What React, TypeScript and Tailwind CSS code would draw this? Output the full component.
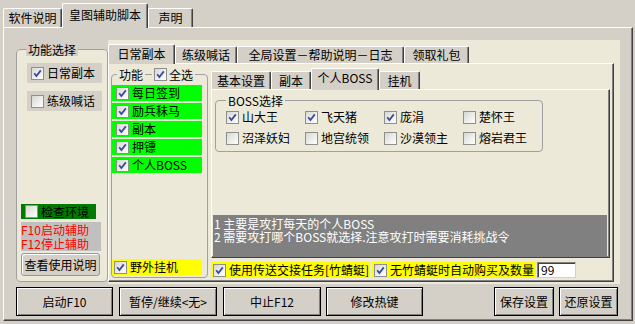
import React from 'react';

const FONT = "font-['Noto_Sans_CJK_SC','Noto_Sans',sans-serif]";
const PANEL =
  'border-l border-t border-white border-r border-b border-r-[#404040] border-b-[#404040] shadow-[inset_-1px_-1px_0_#808080]';
const TAB =
  'flex items-center justify-center rounded-t-[2px] border-l border-t border-white border-r border-r-[#404040] shadow-[inset_-1px_0_0_#808080] bg-[#d4d0c8]';
const BTN =
  'flex h-[29px] items-center justify-center border border-black bg-[#d4d0c8] shadow-[inset_1px_1px_0_#ffffff,inset_-1px_-1px_0_#808080]';

// xp style checkbox
function Box({ on }: { on?: boolean }) {
  return (
    <span className="flex h-[13px] w-[13px] shrink-0 items-center justify-center border border-[#8e8f8f] bg-linear-to-br from-[#d8d8d2] to-white">
      {on && (
        <svg width="9" height="9" viewBox="0 0 9 9">
          <path d="M1.2 4.2 L3.4 7 L7.8 1.4" fill="none" stroke="#3a4aa0" strokeWidth="1.8" />
        </svg>
      )}
    </span>
  );
}

const funcs = ['每日签到', '励兵秣马', '副本', '押镖', '个人BOSS'];
const bosses = [
  { name: '山大王', on: true },
  { name: '飞天猪', on: true },
  { name: '庞涓', on: true },
  { name: '楚怀王', on: false },
  { name: '沼泽妖妇', on: false },
  { name: '地宫统领', on: false },
  { name: '沙漠领主', on: false },
  { name: '熔岩君王', on: false },
];

export default function App() {
  return (
    <div className={`h-[324px] w-[635px] overflow-hidden bg-[#d4d0c8] pl-[3px] pt-[3px] text-[12px] leading-[14px] text-black ${FONT}`}>
      {/* outer tabs */}
      <div className="flex h-[24px] items-end">
        <div className={`${TAB} h-[19px] w-[59px]`}>软件说明</div>
        <div className={`${TAB} relative z-10 -mb-px h-[25px] w-[86px] pb-[3px]`}>皇图辅助脚本</div>
        <div className={`${TAB} h-[19px] w-[45px]`}>声明</div>
      </div>

      <div className={`${PANEL} flex h-[294px] w-[630px] flex-col`}>
        <div className="mt-[12px] flex pl-[12px]">
          {/* 功能选择 */}
          <fieldset className="mt-[3px] flex h-[239px] w-[92px] flex-col rounded-[4px] border border-[#a0a0a0] bg-[#ece9d8] px-0 pb-[5px]">
            <legend className="ml-[9px] bg-[#d4d0c8] px-[2px] leading-[13px]">功能选择</legend>
            <div className="ml-[10px] mt-[7px] flex h-[20px] w-[75px] items-center gap-[3px] bg-[#d4d0c8] pl-[4px]">
              <Box on />
              <span>日常副本</span>
            </div>
            <div className="ml-[10px] mt-[8px] flex h-[20px] w-[75px] items-center gap-[3px] bg-[#d4d0c8] pl-[4px]">
              <Box />
              <span>练级喊话</span>
            </div>
            <div className="ml-[4px] mt-auto flex h-[15px] w-[75px] items-center gap-[3px] bg-[#007a00] pl-[4px]">
              <Box />
              <span>检查环境</span>
            </div>
            <div className="ml-[4px] mt-[3px] h-[29px] w-[80px] bg-[#c0c0c0] pt-[1px] text-[#ff0000] leading-[14px]">
              <div>F10启动辅助</div>
              <div>F12停止辅助</div>
            </div>
            <div className="ml-[4px] mt-[2px] flex h-[23px] w-[79px] items-center justify-center rounded-[3px] border border-[#7f9db9] bg-[#d4d0c8] shadow-[inset_1px_1px_0_#ffffff]">
              查看使用说明
            </div>
          </fieldset>

          {/* cream frame with inner tabs */}
          <div className="h-[244px] w-[512px] bg-[#ece9d8] pb-[2px] pr-[6px] pt-[4px]">
            <div className="flex h-full flex-col">
              <div className="flex h-[19px] items-end">
                <div className={`${TAB} relative z-10 -mb-px h-[20px] w-[67px] pb-[2px]`}>日常副本</div>
                <div className={`${TAB} h-[17px] w-[62px]`}>练级喊话</div>
                <div className={`${TAB} h-[17px] w-[167px]`}>全局设置－帮助说明－日志</div>
                <div className={`${TAB} h-[17px] w-[65px]`}>领取礼包</div>
              </div>

              <div className={`${PANEL} flex flex-1 pl-[2px] pt-[4px]`}>
                {/* 功能 */}
                <fieldset className="flex h-[210px] w-[97px] flex-col rounded-[4px] border border-[#a0a0a0] px-0 pb-[2px]">
                  <legend className="ml-[5px] flex items-center leading-[13px]">
                    <span className="px-[2px]">功能</span>
                    <span className="h-px w-[7px] bg-[#a0a0a0]" />
                    <span className="flex items-center gap-[2px] px-[2px]">
                      <Box on />
                      <span>全选</span>
                    </span>
                  </legend>
                  <div className="mt-[4px] flex flex-col gap-[2px]">
                    {funcs.map((f) => (
                      <div key={f} className="flex h-[16px] w-[90px] items-center gap-[3px] bg-[#00ff00] pl-[4px]">
                        <Box on />
                        <span>{f}</span>
                      </div>
                    ))}
                  </div>
                  <div className="mt-auto flex h-[16px] w-[90px] items-center gap-[3px] bg-[#ffff00] pl-[2px]">
                    <Box on />
                    <span>野外挂机</span>
                  </div>
                </fieldset>

                {/* 基本设置 tabs */}
                <div className="ml-[3px] flex w-[399px] flex-col">
                  <div className="flex h-[21px] items-end">
                    <div className={`${TAB} h-[18px] w-[60px]`}>基本设置</div>
                    <div className={`${TAB} h-[18px] w-[40px]`}>副本</div>
                    <div className={`${TAB} relative z-10 -mb-px h-[22px] w-[68px] pb-[3px]`}>个人BOSS</div>
                    <div className={`${TAB} h-[18px] w-[41px]`}>挂机</div>
                  </div>
                  <div className={`${PANEL} flex h-[169px] flex-col pl-[1px]`}>
                    <fieldset className="ml-[2px] mt-[4px] h-[58px] w-[322px] rounded-[4px] border border-[#a0a0a0] px-0">
                      <legend className="ml-[10px] px-[2px] leading-[13px]">BOSS选择</legend>
                      <div className="mt-[3px] grid grid-cols-[79px_79px_79px_79px] gap-y-[7px] pl-[10px]">
                        {bosses.map((b) => (
                          <div key={b.name} className="flex h-[14px] items-center gap-[3px]">
                            <Box on={b.on} />
                            <span>{b.name}</span>
                          </div>
                        ))}
                      </div>
                    </fieldset>
                    <div className="mt-auto mb-[1px] h-[41px] w-[394px] bg-[#808080] pl-[1px] pt-[2px] leading-[13px] text-white">
                      <div>1 主要是攻打每天的个人BOSS</div>
                      <div>2 需要攻打哪个BOSS就选择.注意攻打时需要消耗挑战令</div>
                    </div>
                  </div>
                  <div className="mt-[4px] flex items-center">
                    <div className="flex h-[16px] w-[159px] items-center gap-[3px] bg-[#ffff00] pl-[2px]">
                      <Box on />
                      <span>使用传送交接任务[竹蜻蜓]</span>
                    </div>
                    <div className="ml-[2px] flex h-[16px] w-[164px] items-center gap-[3px] bg-[#ffff00] pl-[2px]">
                      <Box on />
                      <span>无竹蜻蜓时自动购买及数量</span>
                    </div>
                    <div className="ml-px h-[16px] w-[39px] border border-[#808080] border-b-[#d4d0c8] border-r-[#d4d0c8] bg-white pl-[3px] leading-[13px] shadow-[inset_1px_1px_0_#404040]">
                      99
                    </div>
                  </div>
                </div>
              </div>
            </div>
          </div>
        </div>

        {/* bottom buttons */}
        <div className="mt-[3px] flex pl-[12px]">
          <div className={`${BTN} w-[97px]`}>启动F10</div>
          <div className={`${BTN} ml-[6px] w-[98px]`}>暂停/继续&lt;无&gt;</div>
          <div className={`${BTN} ml-[6px] w-[98px]`}>中止F12</div>
          <div className={`${BTN} ml-[5px] w-[97px]`}>修改热键</div>
          <div className={`${BTN} ml-[71px] w-[60px]`}>保存设置</div>
          <div className={`${BTN} ml-[5px] w-[59px]`}>还原设置</div>
        </div>
      </div>
    </div>
  );
}
